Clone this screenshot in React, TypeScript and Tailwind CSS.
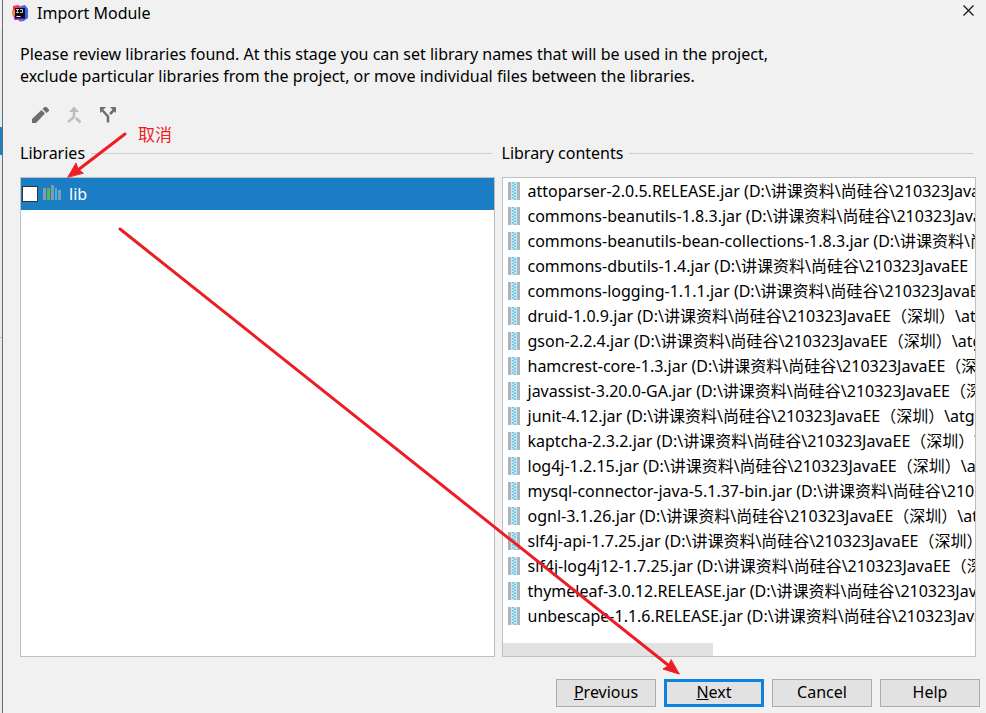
import React from "react";

const PATH = "(D:\\讲课资料\\尚硅谷\\210323JavaEE（深圳）\\atg";

const jars = [
  "attoparser-2.0.5.RELEASE.jar",
  "commons-beanutils-1.8.3.jar",
  "commons-beanutils-bean-collections-1.8.3.jar",
  "commons-dbutils-1.4.jar",
  "commons-logging-1.1.1.jar",
  "druid-1.0.9.jar",
  "gson-2.2.4.jar",
  "hamcrest-core-1.3.jar",
  "javassist-3.20.0-GA.jar",
  "junit-4.12.jar",
  "kaptcha-2.3.2.jar",
  "log4j-1.2.15.jar",
  "mysql-connector-java-5.1.37-bin.jar",
  "ognl-3.1.26.jar",
  "slf4j-api-1.7.25.jar",
  "slf4j-log4j12-1.7.25.jar",
  "thymeleaf-3.0.12.RELEASE.jar",
  "unbescape-1.1.6.RELEASE.jar",
];

function IdeaLogo() {
  return (
    <svg width="17" height="17" viewBox="0 0 17 17" className="shrink-0" aria-hidden="true">
      <path d="M1 1 6 0l4 2v5L4 15l-3-4-1-4 1-2z" fill="#f5325c" />
      <path d="M0 6l3-1v5l-1 1-2-2z" fill="#fc8a2c" />
      <path d="M9 1l4-1 3 4v9l-5 3.500L8 13z" fill="#3f63ee" />
      <path d="M2 11l0 4 4 0 3 2 2-3z" fill="#b23be0" />
      <path d="M3 3h10v10.500H3z" fill="#0b0b0d" />
      <path d="M4 4.500h3M5.500 4.500v3M4 7.500h3M8 4.500h2.500v3H8" stroke="#c8c8c8" strokeWidth="1" fill="none" />
      <path d="M4.500 11.500h4" stroke="#fff" strokeWidth="1" />
    </svg>
  );
}

function PencilIcon() {
  return (
    <svg width="18" height="18" viewBox="0 0 18 18" fill="#6e6e6e" aria-hidden="true">
      <path d="M1 17v-4L10.500 4 14 7.500 5 17z" />
      <path d="M11.500 3 13.500 1h2L18 3.500V5l-2.500 2z" />
    </svg>
  );
}

function MergeIcon() {
  return (
    <svg width="18" height="18" viewBox="0 0 18 18" fill="none" stroke="#bdbdbd" strokeWidth="2.500" aria-hidden="true">
      <path d="M9 5v6L3 16M11 12l4.500 4.500" />
      <path d="M4 6 9 .5 14 6z" fill="#bdbdbd" stroke="none" />
    </svg>
  );
}

function SplitIcon() {
  return (
    <svg width="18" height="18" viewBox="0 0 18 18" fill="none" stroke="#6e6e6e" strokeWidth="2.500" aria-hidden="true">
      <path d="M9 16.500V10.500L3.500 4.500M11 8l4-4" />
      <path d="M1 1h6L1 7zM17 1v6l-6-6z" fill="#6e6e6e" stroke="none" />
    </svg>
  );
}

function LibraryIcon() {
  return (
    <svg width="18" height="18" viewBox="0 0 18 18" className="shrink-0" aria-hidden="true">
      <path d="M0 3h3v12H0zM8 0h3v15H8zM15 5h3v10h-3z" fill="#7f9db2" />
      <path d="M4 3h3v12H4z" fill="#62b543" />
      <path d="M12 3h2v12h-2z" fill="#40b6e0" />
    </svg>
  );
}

function ArchiveIcon() {
  return (
    <svg width="14" height="18" viewBox="0 0 14 18" className="shrink-0" aria-hidden="true">
      <path d="M1 0h3v18H1zM10 0h3v18h-3z" fill="#aab5bd" />
      <path d="M4 0h6v18H4z" fill="#cfe6ef" />
      <path d="M6 0v18M8 1.500v16.500" stroke="#62c6ea" strokeWidth="2" strokeDasharray="1.500 1.500" />
    </svg>
  );
}

function Heading({ id, children }: { id: string; children: React.ReactNode }) {
  return (
    <div className="mr-[3px] flex h-6 items-center gap-[6px]">
      <h2 id={id}>{children}</h2>
      <span className="h-px flex-1 bg-[#cdcdcd]" />
    </div>
  );
}

function DialogButton({ children, primary = false }: { children: React.ReactNode; primary?: boolean }) {
  return (
    <button
      type="button"
      className={
        primary
          ? "h-7 w-[100px] border-3 border-[#0a84e0] bg-[#e2e2e2] pb-[2px] text-center leading-5"
          : "h-7 w-[100px] border border-[#adadad] bg-[#e2e2e2] pb-[2px] text-center leading-6"
      }
    >
      {children}
    </button>
  );
}

export default function App() {
  return (
    <div className="flex min-h-screen bg-[#f1f1f1] font-['Noto_Sans','Noto_Sans_CJK_SC',sans-serif] text-base leading-[22px] text-black">
      <div className="flex w-[3px] shrink-0 flex-col border-r border-[#6b6e70] bg-[#e4ebf0]">
        <div className="h-[30px] bg-[#f1f1f1]" />
        <div className="mt-[97px] h-7 bg-[#1c7ec4]" />
        <div className="mt-[182px] h-px bg-[#bcc2c6]" />
      </div>
      <main className="relative min-w-0 flex-1 pb-[6px]">
        <header className="flex h-[26px] items-center gap-2 pr-3 pl-[9px]">
          <IdeaLogo />
          <h1 className="flex-1">Import Module</h1>
          <button type="button" aria-label="Close" className="pb-[6px]">
            <svg width="11" height="11" viewBox="0 0 11 11" stroke="#111" strokeWidth="1.200" aria-hidden="true">
              <path d="M.5.5l10 10M10.500.5l-10 10" />
            </svg>
          </button>
        </header>

        <p className="mt-[17px] max-w-[800px] pl-[17px]">
          Please review libraries found. At this stage you can set library names that will be used in the project,
          <br />
          exclude particular libraries from the project, or move individual files between the libraries.
        </p>

        <div className="mt-[19px] flex gap-4 pl-7">
          <button type="button" aria-label="Rename"><PencilIcon /></button>
          <button type="button" aria-label="Merge" disabled><MergeIcon /></button>
          <button type="button" aria-label="Split"><SplitIcon /></button>
        </div>

        <div className="mt-[17px] grid grid-cols-2 gap-[7px] pr-[10px] pl-[17px]">
          <section className="flex min-w-0 flex-col gap-3" aria-labelledby="libraries">
            <Heading id="libraries">Libraries</Heading>
            <div className="flex-1 border border-[#bfbfbf] bg-white">
              <label className="flex h-8 items-center bg-[#1b7dc4] pl-[1px] text-white">
                <input type="checkbox" className="size-4 appearance-none border border-[#333] bg-white" />
                <span className="mr-2 ml-[5px]"><LibraryIcon /></span>
                lib
              </label>
            </div>
          </section>
          <section className="flex min-w-0 flex-col gap-3" aria-labelledby="contents">
            <Heading id="contents">Library contents</Heading>
            <div className="overflow-hidden border border-[#bfbfbf] bg-white">
              <ul className="pb-[15px]">
                {jars.map((jar) => (
                  <li key={jar} className="flex h-[25px] items-center gap-[7px] pl-1 whitespace-nowrap">
                    <ArchiveIcon />
                    {jar} {PATH}
                  </li>
                ))}
              </ul>
              <div className="h-[13px] w-[210px] bg-[#e2e2e2]" />
            </div>
          </section>
        </div>

        <footer className="mt-[22px] flex justify-end gap-2 pr-[6px]">
          <DialogButton><u>P</u>revious</DialogButton>
          <DialogButton primary><u>N</u>ext</DialogButton>
          <DialogButton>Cancel</DialogButton>
          <DialogButton>Help</DialogButton>
        </footer>

        <svg width="700" height="700" viewBox="3 0 700 700" className="pointer-events-none absolute top-0 left-0" aria-hidden="true">
          <g stroke="#ee1c25" strokeWidth="3" strokeLinecap="round" fill="#ee1c25">
            <path d="M125 134 78 170M120 229 668 665" />
            <path d="M68 177 76 163 78 169 83 173zM679 674 663 669 668 666 671 660z" strokeWidth="1" />
          </g>
        </svg>
        <span className="absolute top-[124px] left-[135px] text-[17px] leading-[22px] text-[#ee1c25]">取消</span>
      </main>
    </div>
  );
}
